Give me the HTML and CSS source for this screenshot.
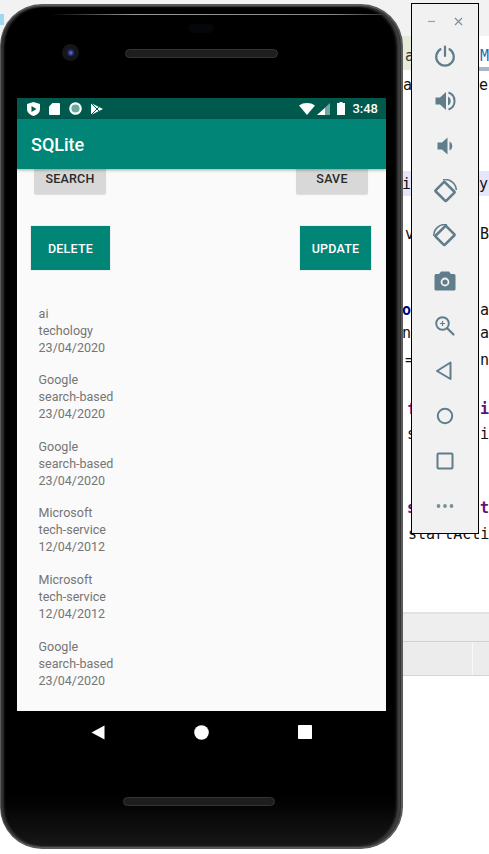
FILE: index.html
```html
<!DOCTYPE html>
<html lang="en">
  <head>
    <meta charset="UTF-8" />
    <title>SQLite</title>
    <link rel="stylesheet" href="styles.css">
  </head>
  <body>
    <!-- IDE behind the emulator -->
    <div class="ide">
      <div class="ide-top"></div>
      <div class="ide-sliver"></div>
      <div class="ide-tab"></div>
      <div class="ide-tab-line"></div>
      <div class="ide-hl"></div>
      <span class="code tab-l" style="top:47px;left:405px">av</span>
      <span class="code tab-m" style="top:47px;left:480px">M</span>
      <span class="code" style="top:76px;left:403px">ay</span>
      <span class="code" style="top:76px;left:479px">e</span>
      <span class="code" style="top:175px;left:402px">ir</span>
      <span class="code" style="top:175px;left:479px">y</span>
      <span class="code" style="top:225px;left:405px">v</span>
      <span class="code" style="top:225px;left:480px">B</span>
      <span class="code kw-blue" style="top:301px;left:402px">o:</span>
      <span class="code" style="top:301px;left:480px">a</span>
      <span class="code" style="top:324px;left:402px">nC</span>
      <span class="code" style="top:324px;left:480px">a</span>
      <span class="code" style="top:351px;left:405px">=</span>
      <span class="code" style="top:351px;left:480px">n</span>
      <span class="code kw" style="top:400px;left:407px">f</span>
      <span class="code kw" style="top:400px;left:480px">i</span>
      <span class="code" style="top:425px;left:407px">s</span>
      <span class="code" style="top:425px;left:480px">i</span>
      <span class="code kw" style="top:499px;left:407px">s</span>
      <span class="code kw" style="top:499px;left:480px">t</span>
      <span class="code" style="top:525px;left:408px">startActi</span>
      <div class="ide-bottom">
        <div class="ide-row"></div>
        <div class="ide-row ide-row-2"></div>
      </div>
    </div>

    <div class="phone">
      <div class="side-btn btn-a"></div>
      <div class="side-btn btn-b"></div>
      <div class="glare"></div>
      <div class="bezel-top">
        <div class="sensor"></div>
        <div class="camera"><div class="lens"></div></div>
        <div class="speaker"></div>
      </div>

      <div class="screen">
        <div class="status-bar">
          <div class="status-left">
            <svg width="13" height="14" viewBox="0 0 13 14"><path fill="#fff" d="M6.5 0 L13 2 V7 C13 10.5 10 13 6.5 14 C3 13 0 10.5 0 7 V2 Z"/><path fill="#00594d" d="M4.5 4 L9.5 7 L4.5 10 Z"/></svg>
            <svg width="11" height="12" viewBox="0 0 11 12"><path fill="#fff" d="M3.5 0 H10 A1 1 0 0 1 11 1 V11 A1 1 0 0 1 10 12 H1 A1 1 0 0 1 0 11 V3.5 Z"/></svg>
            <svg width="13" height="13" viewBox="0 0 13 13"><circle cx="6.5" cy="6.5" r="5.2" fill="#6fa89e" stroke="#fff" stroke-width="2.2"/></svg>
            <svg width="12" height="12" viewBox="0 0 12 12"><path fill="#fff" d="M0 0 L12 6 L0 12 Z"/><path fill="none" stroke="#00594d" stroke-width="1" d="M0 0 L6 6 L0 12 M6 6 L9 3 M6 6 L9 9"/></svg>
          </div>
          <div class="status-right">
            <svg width="16" height="12" viewBox="0 0 16 12"><path fill="#fff" d="M0 2.5 C4.5 -0.8 11.5 -0.8 16 2.5 L8 12 Z"/></svg>
            <svg class="sig" width="13" height="12" viewBox="0 0 13 12"><path fill="#6fa89e" d="M13 0 V12 H0 Z"/><path fill="#fff" d="M8 5 V12 H0 L8 5 Z"/></svg>
            <svg class="bat" width="8" height="13" viewBox="0 0 8 13"><path fill="#fff" d="M2.5 0 H5.5 V1 H8 V13 H0 V1 H2.5 Z"/></svg>
            <span class="clock">3:48</span>
          </div>
        </div>
        <div class="app-bar">SQLite</div>

        <div class="content">
          <div class="row row-grey">
            <button class="btn btn-grey btn-search">SEARCH</button>
            <button class="btn btn-grey btn-save">SAVE</button>
          </div>
          <div class="row row-green">
            <button class="btn btn-green btn-delete">DELETE</button>
            <button class="btn btn-green btn-update">UPDATE</button>
          </div>

          <ul class="list">
            <li>ai<br>techology<br>23/04/2020</li>
            <li>Google<br>search-based<br>23/04/2020</li>
            <li>Google<br>search-based<br>23/04/2020</li>
            <li>Microsoft<br>tech-service<br>12/04/2012</li>
            <li>Microsoft<br>tech-service<br>12/04/2012</li>
            <li>Google<br>search-based<br>23/04/2020</li>
          </ul>
        </div>
      </div>

      <div class="nav-bar">
        <svg width="14" height="15" viewBox="0 0 14 15"><path fill="#fff" d="M13.5 0.5 V14.5 L0.5 7.5 Z"/></svg>
        <svg width="15" height="15" viewBox="0 0 15 15"><circle cx="7.5" cy="7.5" r="7.3" fill="#fff"/></svg>
        <svg width="14" height="14" viewBox="0 0 14 14"><rect width="14" height="14" rx="0.8" fill="#fff"/></svg>
      </div>
      <div class="speaker speaker-bottom"></div>
    </div>

    <div class="panel">
      <div class="panel-head">
        <svg width="9" height="9" viewBox="0 0 9 9"><path stroke="#90a4ae" stroke-width="1.2" d="M1 4.5 H8"/></svg>
        <svg width="9" height="9" viewBox="0 0 9 9"><path stroke="#78909c" stroke-width="1.2" d="M1 1 L8 8 M8 1 L1 8"/></svg>
      </div>
      <div class="panel-icons">
        <!-- power -->
        <svg viewBox="0 0 24 24"><path fill="none" stroke="#607d8b" stroke-width="2.2" stroke-linecap="round" d="M12 2.5 V12 M7.5 5.2 A8.8 8.8 0 1 0 16.5 5.2"/></svg>
        <!-- volume up -->
        <svg viewBox="0 0 24 24"><path fill="#607d8b" d="M2.5 8.5 H7 L13 3 V21 L7 15.5 H2.5 Z"/><path fill="#607d8b" d="M15 7.5 A5 5 0 0 1 15 16.5 Z"/><path fill="none" stroke="#607d8b" stroke-width="2" d="M15.5 3.5 A9 9 0 0 1 15.5 20.5"/></svg>
        <!-- volume down -->
        <svg viewBox="0 0 24 24"><path fill="#607d8b" d="M4.5 8.5 H9 L14.5 3.5 V20.5 L9 15.5 H4.5 Z"/><path fill="#607d8b" d="M16.5 7.5 A5 5 0 0 1 16.5 16.5 Z"/></svg>
        <!-- rotate left -->
        <svg viewBox="0 0 24 24"><rect x="5.5" y="5" width="13" height="15" rx="1" transform="rotate(-45 12 12.5)" fill="none" stroke="#607d8b" stroke-width="2.6"/><path fill="none" stroke="#607d8b" stroke-width="1.6" d="M10 0.8 A11 11 0 0 1 23.3 11"/></svg>
        <!-- rotate right -->
        <svg viewBox="0 0 24 24"><rect x="5.5" y="4" width="13" height="15" rx="1" transform="rotate(45 12 11.5)" fill="none" stroke="#607d8b" stroke-width="2.6"/><path fill="none" stroke="#607d8b" stroke-width="1.6" d="M0.8 12 A11 11 0 0 1 14 0.8"/></svg>
        <!-- camera -->
        <svg viewBox="0 0 24 24"><path fill="#607d8b" d="M8 2.5 H16 L18 5 H21 A1.5 1.5 0 0 1 22.5 6.5 V20 A1.5 1.5 0 0 1 21 21.5 H3 A1.5 1.5 0 0 1 1.5 20 V6.5 A1.5 1.5 0 0 1 3 5 H6 Z"/><circle cx="12" cy="13" r="4.4" fill="#f1f1f1"/><circle cx="12" cy="13" r="2.6" fill="#607d8b"/></svg>
        <!-- zoom -->
        <svg viewBox="0 0 24 24"><circle cx="9.5" cy="9.5" r="6.3" fill="none" stroke="#607d8b" stroke-width="1.9"/><path fill="none" stroke="#607d8b" stroke-width="1.2" d="M9.5 7 V12 M7 9.5 H12"/><path stroke="#607d8b" stroke-width="2.2" stroke-linecap="round" d="M14.5 14.5 L20.5 20.5"/></svg>
        <!-- back -->
        <svg viewBox="0 0 24 24"><path fill="none" stroke="#607d8b" stroke-width="2" stroke-linejoin="round" d="M17.5 3.5 V20 L4 12 Z"/></svg>
        <!-- home -->
        <svg viewBox="0 0 24 24"><circle cx="12" cy="12" r="7.2" fill="none" stroke="#607d8b" stroke-width="2"/></svg>
        <!-- overview -->
        <svg viewBox="0 0 24 24"><rect x="4.5" y="4.5" width="15" height="15" rx="1" fill="none" stroke="#607d8b" stroke-width="2"/></svg>
        <!-- more -->
        <svg viewBox="0 0 24 24"><circle cx="5.5" cy="12" r="1.9" fill="#78909c"/><circle cx="12" cy="12" r="1.9" fill="#78909c"/><circle cx="18.5" cy="12" r="1.9" fill="#78909c"/></svg>
      </div>
    </div>
  </body>
</html>
```
FILE: styles.css
```css
* {
  box-sizing: border-box;
}

html,
body {
  margin: 0;
  height: 854px;
  overflow: hidden;
  background: #fff;
}

body {
  position: relative;
  width: 489px;
  font-family: Roboto, sans-serif;
}

/* ide behind */
.ide {
  position: absolute;
  inset: 0;
}

.ide-top {
  height: 36px;
  background: #f2f2f2;
}

.ide-sliver {
  position: absolute;
  left: 0;
  top: 14px;
  width: 4px;
  height: 11px;
  background: #9ed8f2;
}

.ide-tab {
  position: absolute;
  left: 400px;
  top: 36px;
  width: 12px;
  height: 34px;
  background: #e4ecd9;
}

.ide-tab-line {
  position: absolute;
  left: 478px;
  top: 67px;
  width: 11px;
  height: 4px;
  background: #a9b4c4;
}

.ide-hl {
  position: absolute;
  left: 400px;
  top: 171px;
  width: 89px;
  height: 25px;
  background: #e6e6fa;
}

.code {
  position: absolute;
  font-family: "DejaVu Sans Mono", monospace;
  font-size: 15px;
  line-height: 18px;
  color: #111;
  white-space: pre;
}

.tab-l {
  color: #333;
}

.tab-m {
  color: #1b6fb5;
}

.kw {
  color: #660e7a;
  font-weight: bold;
}

.kw-blue {
  color: #000080;
  font-weight: bold;
}

.ide-bottom {
  position: absolute;
  left: 300px;
  right: 0;
  top: 612px;
  border-top: 2px solid #e2e2e2;
}

.ide-row {
  height: 28px;
  background: #eee;
  border-bottom: 1px solid #d0d0d0;
}

.ide-row-2 {
  height: 34px;
  background: linear-gradient(to right, #ececec 172px, #f8f8f8 172px, #f8f8f8 173px, #ececec 173px);
  border-bottom: 1px solid #d4d4d4;
}

/* phone */
.phone {
  position: absolute;
  left: 0;
  top: 4px;
  width: 403px;
  height: 845px;
  padding: 0 17px;
  display: flex;
  flex-direction: column;
  border-radius: 42px;
  border: 2px solid #5a5a5a;
  border-left-width: 1px;
  background: linear-gradient(to bottom, #000 0, #000 790px, #191919 845px);
  box-shadow: inset 0 0 0 1px #333, inset 3px 0 2px #333, inset -4px 0 3px #444;
}

.glare {
  position: absolute;
  left: 50px;
  right: 18px;
  top: 8px;
  height: 1px;
  background: linear-gradient(to right, #000, #9a9a9a 25%, #8a8a8a 85%, #333);
}

.side-btn {
  position: absolute;
  right: -2px;
  width: 2px;
  background: #5c5c5c;
}

.btn-a {
  top: 62px;
  height: 10px;
}

.btn-b {
  top: 520px;
  height: 40px;
}

.bezel-top {
  position: relative;
  height: 92px;
  flex: none;
}

.sensor {
  position: absolute;
  left: 170px;
  top: 18px;
  width: 26px;
  height: 9px;
  border-radius: 5px;
  background: #05060a;
}

.camera {
  position: absolute;
  left: 44px;
  top: 38px;
  width: 17px;
  height: 17px;
  border-radius: 50%;
  background: #14161c;
  display: flex;
  align-items: center;
  justify-content: center;
}

.lens {
  width: 7px;
  height: 7px;
  border-radius: 50%;
  background: radial-gradient(circle at 55% 55%, #6f78d8 0, #24307a 45%, #0b0d22 100%);
}

.speaker {
  position: absolute;
  left: 107px;
  top: 43px;
  width: 153px;
  height: 9px;
  border-radius: 5px;
  background: #1e1e1e;
  border: 1px solid #343434;
}

.speaker-bottom {
  left: 122px;
  top: 791px;
  width: 152px;
}

/* screen */
.screen {
  width: 369px;
  height: 613px;
  flex: none;
  margin-left: -1px;
  display: flex;
  flex-direction: column;
  overflow: hidden;
  background: #fafafa;
}

.status-bar {
  height: 21px;
  flex: none;
  padding: 0 8px 0 10px;
  background: #00594d;
  display: flex;
  align-items: center;
  justify-content: space-between;
}

.status-left {
  display: flex;
  align-items: center;
  gap: 9px;
}

.status-right {
  display: flex;
  align-items: center;
  color: #fff;
  font-size: 13px;
  font-weight: 500;
}

.sig {
  margin-left: 2px;
}

.bat {
  margin-left: 7px;
}

.clock {
  margin-left: 7px;
}

.app-bar {
  position: relative;
  z-index: 1;
  height: 50px;
  flex: none;
  padding: 1px 0 0 14px;
  background: #008577;
  color: #fff;
  font-size: 18px;
  font-weight: 500;
  line-height: 50px;
  box-shadow: 0 1px 3px rgba(0, 0, 0, 0.35);
}

.content {
  flex: 1;
}

.row {
  display: flex;
  justify-content: space-between;
}

.row-grey {
  margin-top: -7px;
  padding: 0 18px 0 17px;
}

.row-green {
  margin-top: 32px;
  padding: 0 15px 0 14px;
}

.btn {
  border: none;
  padding: 1px 0 0;
  font-family: Roboto, sans-serif;
  font-size: 12.5px;
  font-weight: 500;
  letter-spacing: 0.2px;
}

.btn-grey {
  height: 32px;
  border-radius: 2px;
  background: #d7d8d7;
  color: #2a2a2a;
  box-shadow: 0 1px 1px rgba(0, 0, 0, 0.12);
}

.btn-search,
.btn-save {
  width: 72px;
}

.btn-green {
  height: 44px;
  background: #008577;
  color: #fff;
  box-shadow: 0 0 1px rgba(0, 0, 0, 0.3);
}

.btn-delete {
  width: 79px;
}

.btn-update {
  width: 71px;
}

.list {
  list-style: none;
  margin: 0;
  padding: 34.6px 0 0 21.6px;
  color: #757575;
  font-size: 12.5px;
  line-height: 17px;
}

.list li {
  margin-bottom: 15.6px;
}

/* nav keys */
.nav-bar {
  height: 28px;
  margin: 7px 0 0;
  padding: 0 72px 0 73px;
  display: flex;
  align-items: center;
  justify-content: space-between;
  flex: none;
}

/* emulator toolbar */
.panel {
  position: absolute;
  left: 411px;
  top: 3px;
  width: 68px;
  height: 531px;
  background: #f1f1f1;
  border: 1px solid #000;
  display: flex;
  flex-direction: column;
}

.panel-head {
  height: 35px;
  padding: 0 15px;
  display: flex;
  align-items: center;
  justify-content: space-between;
}

.panel-icons {
  display: flex;
  flex-direction: column;
  align-items: center;
  gap: 21px;
  padding-top: 5px;
}

.panel-icons svg {
  width: 24px;
  height: 24px;
  flex: none;
}
```
